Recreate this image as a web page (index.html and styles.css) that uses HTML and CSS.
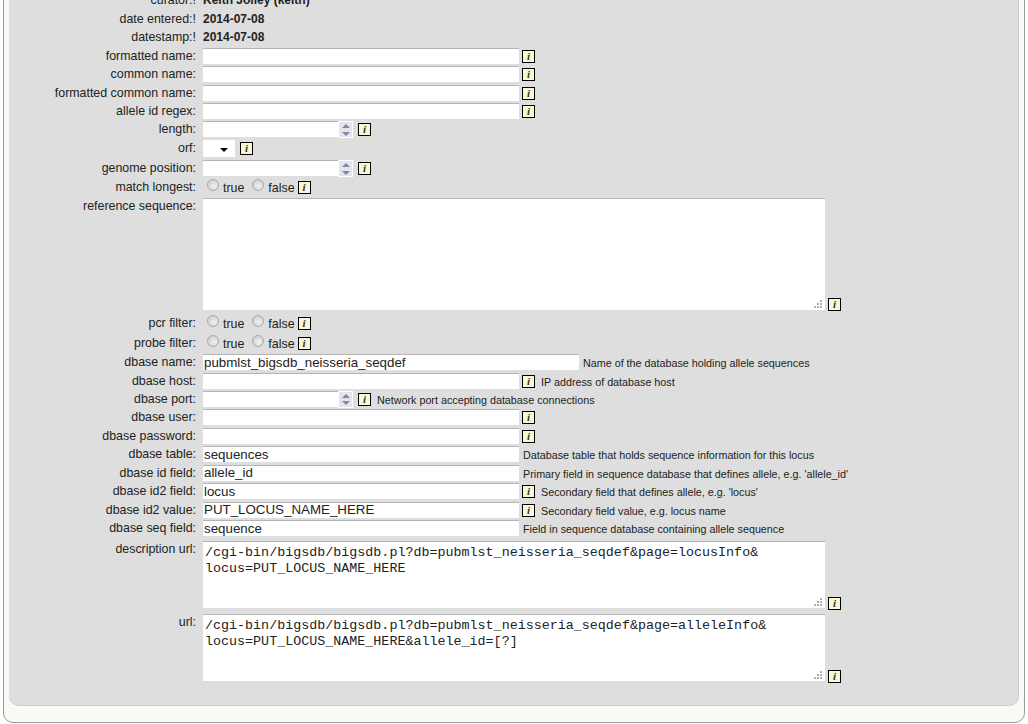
FILE: index.html
```html
<!DOCTYPE html>
<html lang="en">
<head>
  <meta charset="UTF-8" />
  <title>Locus definition</title>
  <link rel="stylesheet" href="styles.css">
</head>
<body>

<div class="box">
  <form class="panel">
    <div class="row"><label>curator:!</label><b>Keith Jolley (keith)</b></div>
    <div class="row"><label>date entered:!</label><b>2014-07-08</b></div>
    <div class="row"><label>datestamp:!</label><b>2014-07-08</b></div>

    <div class="row"><label>formatted name:</label><input type="text" class="wide"><span class="info">i</span></div>
    <div class="row"><label>common name:</label><input type="text" class="wide"><span class="info">i</span></div>
    <div class="row"><label>formatted common name:</label><input type="text" class="wide"><span class="info">i</span></div>
    <div class="row"><label>allele id regex:</label><input type="text" class="wide"><span class="info">i</span></div>
    <div class="row"><label>length:</label><input type="text" class="num"><span class="spin"><i class="up"></i><i class="down"></i></span><span class="info">i</span></div>
    <div class="row row-tall"><label>orf:</label><span class="pick"><select></select></span><span class="info">i</span></div>
    <div class="row"><label>genome position:</label><input type="text" class="num"><span class="spin"><i class="up"></i><i class="down"></i></span><span class="info">i</span></div>
    <div class="row row-radio"><label>match longest:</label><input type="radio" name="ml"><span class="opt">true</span><input type="radio" name="ml"><span class="opt">false</span><span class="info info-near">i</span></div>

    <div class="row row-area"><label>reference sequence:</label><textarea class="ref"></textarea><span class="info info-low">i</span></div>

    <div class="row row-radio"><label>pcr filter:</label><input type="radio" name="pcr"><span class="opt">true</span><input type="radio" name="pcr"><span class="opt">false</span><span class="info info-near">i</span></div>
    <div class="row row-radio"><label>probe filter:</label><input type="radio" name="probe"><span class="opt">true</span><input type="radio" name="probe"><span class="opt">false</span><span class="info info-near">i</span></div>

    <div class="row"><label>dbase name:</label><input type="text" class="wider" value="pubmlst_bigsdb_neisseria_seqdef"><span class="note">Name of the database holding allele sequences</span></div>
    <div class="row"><label>dbase host:</label><input type="text" class="wide"><span class="info">i</span><span class="note">IP address of database host</span></div>
    <div class="row"><label>dbase port:</label><input type="text" class="num"><span class="spin"><i class="up"></i><i class="down"></i></span><span class="info">i</span><span class="note">Network port accepting database connections</span></div>
    <div class="row"><label>dbase user:</label><input type="text" class="wide"><span class="info">i</span></div>
    <div class="row"><label>dbase password:</label><input type="text" class="wide"><span class="info">i</span></div>
    <div class="row"><label>dbase table:</label><input type="text" class="wide" value="sequences"><span class="note">Database table that holds sequence information for this locus</span></div>
    <div class="row"><label>dbase id field:</label><input type="text" class="wide" value="allele_id"><span class="note">Primary field in sequence database that defines allele, e.g. 'allele_id'</span></div>
    <div class="row"><label>dbase id2 field:</label><input type="text" class="wide" value="locus"><span class="info">i</span><span class="note">Secondary field that defines allele, e.g. 'locus'</span></div>
    <div class="row"><label>dbase id2 value:</label><input type="text" class="wide" value="PUT_LOCUS_NAME_HERE"><span class="info">i</span><span class="note">Secondary field value, e.g. locus name</span></div>
    <div class="row row-last"><label>dbase seq field:</label><input type="text" class="wide" value="sequence"><span class="note">Field in sequence database containing allele sequence</span></div>

    <div class="row row-url"><label>description url:</label><textarea class="url">/cgi-bin/bigsdb/bigsdb.pl?db=pubmlst_neisseria_seqdef&amp;page=locusInfo&amp;
locus=PUT_LOCUS_NAME_HERE</textarea><span class="info info-low">i</span></div>
    <div class="row row-url"><label>url:</label><textarea class="url">/cgi-bin/bigsdb/bigsdb.pl?db=pubmlst_neisseria_seqdef&amp;page=alleleInfo&amp;
locus=PUT_LOCUS_NAME_HERE&amp;allele_id=[?]</textarea><span class="info info-low">i</span></div>
  </form>
</div>

</body>
</html>
```

FILE: styles.css
```css
html, body {
  height: 724px;
  overflow: hidden;
}

body {
  margin: 0;
  font-family: "Liberation Sans", Arial, sans-serif;
  font-size: 12.4px;
  color: #222;
  background: #fff;
}

.box {
  margin: -40px 3px 0;
  padding: 6px 5px 16px 5px;
  height: 763px;
  box-sizing: border-box;
  border: 1px solid #999;
  border-radius: 10px;
  background: #f9f9f5;
}

.panel {
  height: 100%;
  box-sizing: border-box;
  padding-top: 25.4px;
  background: #dedede;
  border-bottom: 1px solid #ccc;
  border-right: 1px solid #ccc;
  border-radius: 10px;
}

.row {
  display: flex;
  align-items: flex-start;
  height: 18.45px;
}

.row-tall {
  height: 20.6px;
}

.row-radio {
  height: 19.4px;
}

.row-area {
  height: 117px;
}

.row-url {
  height: 73px;
}

.row-last {
  margin-bottom: 2.8px;
}

.row label {
  flex: none;
  width: 187px;
  margin-right: 7px;
  padding-top: 1px;
  text-align: right;
}

.row b {
  font-size: 12px;
  padding-top: 1px;
}

input[type=text] {
  box-sizing: border-box;
  height: 16px;
  margin: 0;
  padding: 0 1px 1px;
  border: 0;
  border-top: 1px solid #b4b4b4;
  background: #fff;
  font: 13.33px "Liberation Sans", Arial, sans-serif;
  color: #222;
  outline: 0;
}

.wide {
  width: 316px;
}

.wider {
  width: 376px;
}

.num {
  width: 135px;
}

.spin {
  flex: none;
  box-sizing: border-box;
  width: 15px;
  height: 17px;
  border: 1px solid #fff;
  background: #e6e6e6;
  display: flex;
  flex-direction: column;
  align-items: center;
  justify-content: space-around;
}

.spin i {
  width: 0;
  height: 0;
  border-left: 4px solid transparent;
  border-right: 4px solid transparent;
}

.spin .up {
  border-bottom: 4px solid #7a86b8;
}

.spin .down {
  border-top: 4px solid #7a86b8;
}

.info {
  flex: none;
  box-sizing: border-box;
  width: 13px;
  height: 13px;
  margin: 2px 0 0 3px;
  border: 1px solid #000;
  background: #f8f8d4;
  font: italic bold 11px/11px "Liberation Serif", serif;
  text-align: center;
  color: #333;
}

.spin + .info {
  margin-left: 5px;
}

.pick + .info {
  margin-left: 5px;
}

.info-near {
  margin-top: 2px;
  margin-left: 3px;
}

.info-low {
  align-self: flex-end;
  margin-left: 3px;
  margin-bottom: 4px;
}

.note {
  margin: 3px 0 0 4px;
  font-size: 10.75px;
  white-space: nowrap;
}

.info + .note {
  margin-left: 6px;
}

.pick {
  position: relative;
  flex: none;
  width: 32px;
  height: 17px;
  background: #fff;
}

.pick select {
  appearance: none;
  width: 100%;
  height: 100%;
  border: 0;
  background: transparent;
  display: block;
}

.pick::after {
  content: "";
  position: absolute;
  right: 7px;
  top: 8px;
  border-left: 4px solid transparent;
  border-right: 4px solid transparent;
  border-top: 4px solid #000;
}

input[type=radio] {
  appearance: none;
  flex: none;
  box-sizing: border-box;
  width: 12px;
  height: 12px;
  margin: 0 4px 0 4px;
  border: 1px solid #a9a9a9;
  border-radius: 50%;
  background: radial-gradient(circle at 60% 60%, #f2f2f2, #c4c4c4);
}

.opt {
  margin: 2px 4px 0 0;
}

.opt + .info {
  margin-left: -1px;
}

/* grip dots drawn by hand, the native one looks different */
textarea {
  flex: none;
  box-sizing: border-box;
  margin: 0;
  padding: 3px 2px;
  border: 0;
  border-top: 1px solid #b4b4b4;
  outline: 0;
  resize: none;
  color: #222;
  font: 13.37px/16px "Liberation Mono", monospace;
  background-color: #fff;
  background-image:
    linear-gradient(#b0b0b0, #b0b0b0), linear-gradient(#b0b0b0, #b0b0b0), linear-gradient(#b0b0b0, #b0b0b0),
    linear-gradient(#b0b0b0, #b0b0b0), linear-gradient(#b0b0b0, #b0b0b0), linear-gradient(#b0b0b0, #b0b0b0);
  background-size: 2px 2px;
  background-repeat: no-repeat;
  background-position:
    right 3px bottom 2px, right 3px bottom 5px, right 3px bottom 8px,
    right 6px bottom 2px, right 6px bottom 5px,
    right 9px bottom 2px;
}

.ref {
  width: 622px;
  height: 112px;
}

.url {
  width: 622px;
  height: 67px;
}
```
